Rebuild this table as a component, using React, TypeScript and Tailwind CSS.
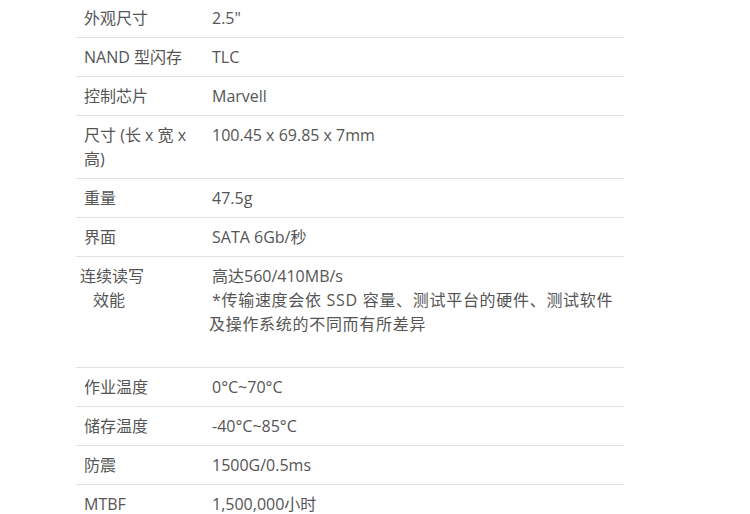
const specs: { label: React.ReactNode; value: React.ReactNode }[] = [
  { label: "外观尺寸", value: '2.5"' },
  { label: "NAND 型闪存", value: "TLC" },
  { label: "控制芯片", value: "Marvell" },
  { label: "尺寸 (长 x 宽 x 高)", value: "100.45 x 69.85 x 7mm" },
  { label: "重量", value: "47.5g" },
  { label: "界面", value: "SATA 6Gb/秒" },
  {
    label: (
      <div className="-ml-1">
        连续读写
        <br />
        <span className="pl-[13px]">效能</span>
      </div>
    ),
    value: (
      <>
        高达560/410MB/s
        <br />
        <span className="tracking-[0.7px]">*传输速度会依 SSD 容量、测试平台的硬件、测试软件</span>
        <br />
        <span className="-ml-[3px] tracking-[0.7px]">及操作系统的不同而有所差异</span>
        <br />
        &nbsp;
      </>
    ),
  },
  { label: "作业温度", value: "0°C~70°C" },
  { label: "储存温度", value: "-40°C~85°C" },
  { label: "防震", value: "1500G/0.5ms" },
  { label: "MTBF", value: "1,500,000小时" },
];

export default function App() {
  return (
    <div className="min-h-[514px] w-[750px] overflow-hidden bg-white">
      <table
        className="-mt-px ml-[76px] w-[548px] border-collapse text-[16px] leading-[24px] text-[#555]"
        style={{ fontFamily: '"Open Sans", "Noto Sans CJK SC", sans-serif' }}
      >
        <tbody>
          {specs.map((row, i) => (
            <tr key={i} className="border-b border-[#e2e2e2]">
              <td className="w-[136px] py-[7px] pl-2 pr-2 align-top">{row.label}</td>
              <td className="py-[7px] pl-0 pr-2 align-top">{row.value}</td>
            </tr>
          ))}
        </tbody>
      </table>
    </div>
  );
}
